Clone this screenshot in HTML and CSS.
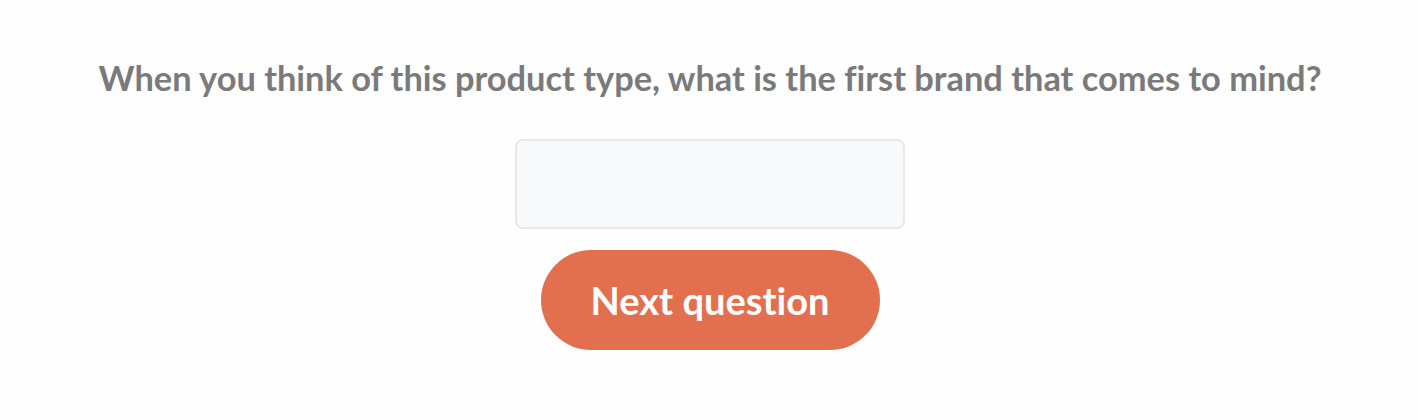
FILE: index.html
```html
<!DOCTYPE html>
<html lang="en">
<head>
<meta charset="utf-8">
<title>Question</title>
<link rel="stylesheet" href="styles.css">
</head>
<body>
<main class="survey">
  <h1 class="question">When you think of this product type, what is the first brand that comes to mind?</h1>
  <input class="answer" type="text" aria-label="Answer">
  <button class="next" type="button">Next question</button>
</main>
</body>
</html>
```

FILE: styles.css
```css
html, body {
  margin: 0;
  padding: 0;
  background: #fefefe;
}

.survey {
  display: flex;
  flex-direction: column;
  align-items: center;
  padding-top: 57px;
  padding-left: 2px;
  font-family: Lato, "Open Sans", sans-serif;
  font-variant-ligatures: none;
}

.question {
  margin: 0;
  font-size: 34.4px;
  line-height: 42px;
  font-weight: 700;
  color: #7a7a7a;
  text-align: center;
}

.answer {
  box-sizing: border-box;
  margin-top: 40px;
  width: 390px;
  height: 90px;
  border: 2px solid #e8e8e8;
  border-radius: 8px;
  background: #f8f9fa;
  outline: none;
}

.next {
  margin-top: 21px;
  width: 339px;
  height: 100px;
  border: none;
  border-radius: 50px;
  background: #e2704f;
  color: #ffffff;
  font-family: Lato, "Open Sans", sans-serif;
  font-variant-ligatures: none;
  font-size: 38px;
  font-weight: 700;
  cursor: pointer;
}
```
